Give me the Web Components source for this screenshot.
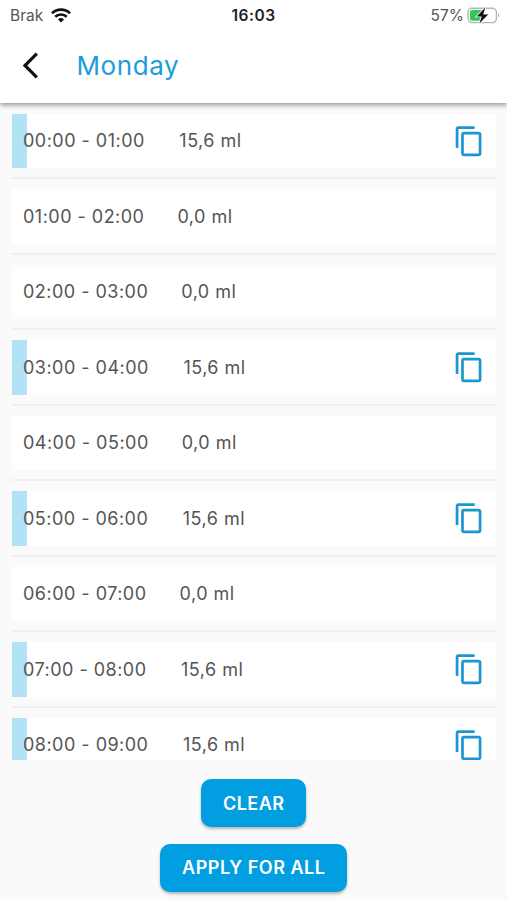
<!DOCTYPE html>
<html lang="en">
<head>
<meta charset="utf-8">
<meta name="viewport" content="width=device-width, initial-scale=1">
<title>Monday</title>
<style>
    body {
        margin: 0;
        font-family: Inter, "Liberation Sans", sans-serif;
        background: #fafafa;
        overflow: hidden;
    }
</style>
</head>
<body>
<day-screen></day-screen>

<script>
class StatusBar extends HTMLElement {
    constructor() {
        super();
        this.attachShadow({ mode: 'open' });
    }

    connectedCallback() {
        this.shadowRoot.innerHTML = `
            <style>
                :host {
                    display: grid;
                    grid-template-columns: 1fr auto 1fr;
                    align-items: center;
                    height: 30px;
                    padding: 0 7px 0 10px;
                    font-size: 15.5px;
                    color: #555;
                }
                .side {
                    display: flex;
                    align-items: center;
                }
                .right {
                    justify-content: flex-end;
                    gap: 3px;
                }
                .left {
                    gap: 8px;
                }
                .time {
                    padding-right: 3px;
                    font-weight: 600;
                    color: #222;
                    letter-spacing: 0.5px;
                }
                svg {
                    display: block;
                }
            </style>
            <div class="side left">
                <span>${this.getAttribute('carrier')}</span>
                <svg width="20" height="15" viewBox="0 0 20 15" fill="none" stroke="#111" stroke-width="2.7">
                    <path d="M1 5.2a13 13 0 0 1 18 0"></path>
                    <path d="M4.2 8.8a8.4 8.4 0 0 1 11.6 0"></path>
                    <path d="M10 14.6l-3-3.1a4.3 4.3 0 0 1 6 0z" fill="#111" stroke="none"></path>
                </svg>
            </div>
            <span class="time">${this.getAttribute('time')}</span>
            <div class="side right">
                <span>${this.getAttribute('battery')}</span>
                <svg width="33" height="17" viewBox="0 0 33 17">
                    <rect x="1" y="1.2" width="28.4" height="14.4" rx="4" fill="#fff" stroke="#b5b5b5" stroke-width="1.4"></rect>
                    <path d="M31 6.2c1.6.7 1.6 3.6 0 4.4z" fill="#b5b5b5"></path>
                    <path d="M5 3h10v10.8H5a2 2 0 0 1-2-2V5a2 2 0 0 1 2-2z" fill="#34c759"></path>
                    <path d="M18.3.6L9.7 9.4h5L12.4 16.4l8.8-9h-5z" fill="#111" stroke="#fff" stroke-width="1.6" paint-order="stroke"></path>
                </svg>
            </div>
        `;
    }
}

class AppHeader extends HTMLElement {
    constructor() {
        super();
        this.attachShadow({ mode: 'open' });
        this.shadowRoot.innerHTML = `
            <style>
                :host {
                    display: flex;
                    align-items: center;
                    height: 73px;
                    box-sizing: border-box;
                    padding: 0 15px 2px 15px;
                }
                button {
                    padding: 0;
                    border: none;
                    background: none;
                    cursor: pointer;
                }
                svg {
                    display: block;
                }
                h1 {
                    margin: 0 0 0 30.5px;
                    font-size: 26px;
                    font-weight: 400;
                    letter-spacing: 0.6px;
                    color: #1b9ddb;
                }
            </style>
            <button aria-label="Back">
                <svg width="31" height="31" viewBox="0 0 24 24">
                    <path d="M17.77 3.77L16 2 6 12l10 10 1.77-1.77L9.54 12z" fill="#111"></path>
                </svg>
            </button>
            <h1><slot></slot></h1>
        `;
    }
}

class DoseRow extends HTMLElement {
    constructor() {
        super();
        this.attachShadow({ mode: 'open' });
    }

    connectedCallback() {
        this.render();
    }

    render() {
        const time = this.getAttribute('time') || '';
        const amount = this.getAttribute('amount') || '';
        const active = this.hasAttribute('active');

        this.shadowRoot.innerHTML = `
            <style>
                :host {
                    display: block;
                    height: 75.5px;
                    box-sizing: border-box;
                    color: #555;
                    font-size: 18px;
                    letter-spacing: 0.48px;
                }
                .tile {
                    display: flex;
                    align-items: center;
                    height: 54.5px;
                    box-sizing: border-box;
                    padding: 0 11px;
                    background: #fff;
                }
                .tile.active {
                    background: linear-gradient(to right, #b1e2f5 15px, #fff 15px);
                }
                .amount {
                    flex: 1;
                    margin-left: 33px;
                }
                .active .amount {
                    margin-left: 34.5px;
                }
                svg {
                    display: block;
                }
                hr {
                    height: 2px;
                    margin: 9px 0 0;
                    border: none;
                    background: #f0f0f0;
                }
            </style>
            <div class="tile ${active ? 'active' : ''}">
                <span>${time}</span>
                <span class="amount">${amount}</span>
                ${active ? `
                <svg width="32.5" height="32.5" viewBox="0 0 24 24">
                    <path fill="#1b96d0" d="M16 1H4c-1.1 0-2 .9-2 2v14h2V3h12V1zm3 4H8c-1.1 0-2 .9-2 2v14c0 1.1.9 2 2 2h11c1.1 0 2-.9 2-2V7c0-1.1-.9-2-2-2zm0 16H8V7h11v14z"></path>
                </svg>` : ''}
            </div>
            <hr>
        `;
    }
}

class ActionButton extends HTMLElement {
    constructor() {
        super();
        this.attachShadow({ mode: 'open' });
        this.shadowRoot.innerHTML = `
            <style>
                :host {
                    display: block;
                }
                button {
                    display: block;
                    height: 48px;
                    padding: 0 21.5px 0 22px;
                    border: none;
                    border-radius: 10px;
                    background: #019ee2;
                    box-shadow: 0 2px 3px rgba(0,0,0,0.28);
                    color: white;
                    font: inherit;
                    font-size: 18px;
                    font-weight: 600;
                    letter-spacing: 0.5px;
                    cursor: pointer;
                }
            </style>
            <button><slot></slot></button>
        `;
    }
}

class DayScreen extends HTMLElement {
    constructor() {
        super();
        this.attachShadow({ mode: 'open' });
    }

    connectedCallback() {
        const rows = [
            ['00:00 - 01:00', '15,6 ml'],
            ['01:00 - 02:00', '0,0 ml'],
            ['02:00 - 03:00', '0,0 ml'],
            ['03:00 - 04:00', '15,6 ml'],
            ['04:00 - 05:00', '0,0 ml'],
            ['05:00 - 06:00', '15,6 ml'],
            ['06:00 - 07:00', '0,0 ml'],
            ['07:00 - 08:00', '15,6 ml'],
            ['08:00 - 09:00', '15,6 ml']
        ];

        this.shadowRoot.innerHTML = `
            <style>
                :host {
                    display: flex;
                    flex-direction: column;
                    height: 900px;
                    background: #fafafa;
                }
                header {
                    flex: none;
                    background: white;
                    box-shadow: 0 2px 5px rgba(0,0,0,0.42);
                    z-index: 1;
                }
                .list {
                    flex: none;
                    height: 657px;
                    box-sizing: border-box;
                    padding: 10.5px 11px 0 12px;
                    overflow: hidden;
                }
                .actions {
                    display: flex;
                    flex-direction: column;
                    align-items: center;
                    gap: 16.5px;
                    padding-top: 19px;
                }
            </style>
            <header>
                <status-bar carrier="Brak" time="16:03" battery="57%"></status-bar>
                <app-header>Monday</app-header>
            </header>
            <div class="list">
                ${rows.map(([time, amount]) => `<dose-row time="${time}" amount="${amount}" ${amount !== '0,0 ml' ? 'active' : ''}></dose-row>`).join('')}
            </div>
            <div class="actions">
                <action-button>CLEAR</action-button>
                <action-button>APPLY FOR ALL</action-button>
            </div>
        `;
    }
}

customElements.define('status-bar', StatusBar);
customElements.define('app-header', AppHeader);
customElements.define('dose-row', DoseRow);
customElements.define('action-button', ActionButton);
customElements.define('day-screen', DayScreen);
</script>
</body>
</html>
